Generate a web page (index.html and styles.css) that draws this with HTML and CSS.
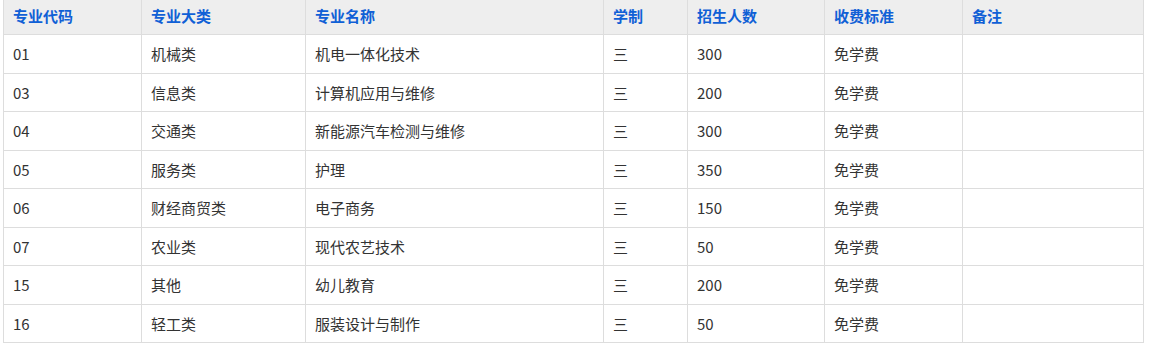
FILE: index.html
```html
<!DOCTYPE html>
<html lang="zh-CN">
<head>
<meta charset="utf-8">
<title>招生专业</title>
<link rel="stylesheet" href="styles.css">
</head>
<body>
<table class="plan">
  <colgroup>
    <col class="c1"><col class="c2"><col class="c3"><col class="c4"><col class="c5"><col class="c6"><col class="c7">
  </colgroup>
  <thead>
    <tr><th>专业代码</th><th>专业大类</th><th>专业名称</th><th>学制</th><th>招生人数</th><th>收费标准</th><th>备注</th></tr>
  </thead>
  <tbody>
    <tr><td>01</td><td>机械类</td><td>机电一体化技术</td><td>三</td><td>300</td><td>免学费</td><td></td></tr>
    <tr><td>03</td><td>信息类</td><td>计算机应用与维修</td><td>三</td><td>200</td><td>免学费</td><td></td></tr>
    <tr><td>04</td><td>交通类</td><td>新能源汽车检测与维修</td><td>三</td><td>300</td><td>免学费</td><td></td></tr>
    <tr><td>05</td><td>服务类</td><td>护理</td><td>三</td><td>350</td><td>免学费</td><td></td></tr>
    <tr><td>06</td><td>财经商贸类</td><td>电子商务</td><td>三</td><td>150</td><td>免学费</td><td></td></tr>
    <tr><td>07</td><td>农业类</td><td>现代农艺技术</td><td>三</td><td>50</td><td>免学费</td><td></td></tr>
    <tr><td>15</td><td>其他</td><td>幼儿教育</td><td>三</td><td>200</td><td>免学费</td><td></td></tr>
    <tr><td>16</td><td>轻工类</td><td>服装设计与制作</td><td>三</td><td>50</td><td>免学费</td><td></td></tr>
  </tbody>
</table>
</body>
</html>
```
FILE: styles.css
```css
html, body {
  margin: 0;
  padding: 0;
  background: #fff;
}
body {
  padding-left: 3px;
  font-family: "Noto Sans CJK SC", "Noto Sans", sans-serif;
  font-size: 15px;
  color: #333;
}
.plan {
  border-collapse: collapse;
  table-layout: fixed;
  width: 1140px;
}
.c1 { width: 138px; }
.c2 { width: 164px; }
.c3 { width: 298px; }
.c4 { width: 84px; }
.c5 { width: 137px; }
.c6 { width: 138px; }
.c7 { width: 181px; }
.plan th,
.plan td {
  border: 1px solid #dddddd;
  text-align: left;
  padding-left: 9px;
  padding-right: 9px;
}
.plan th {
  border-top: 0;
  background: #eeeeee;
  color: #1060d6;
  font-weight: bold;
  padding-top: 6px;
  padding-bottom: 8px;
  line-height: 20px;
}
.plan td {
  padding-top: 8px;
  padding-bottom: 8px;
  line-height: 21.5px;
}
```
